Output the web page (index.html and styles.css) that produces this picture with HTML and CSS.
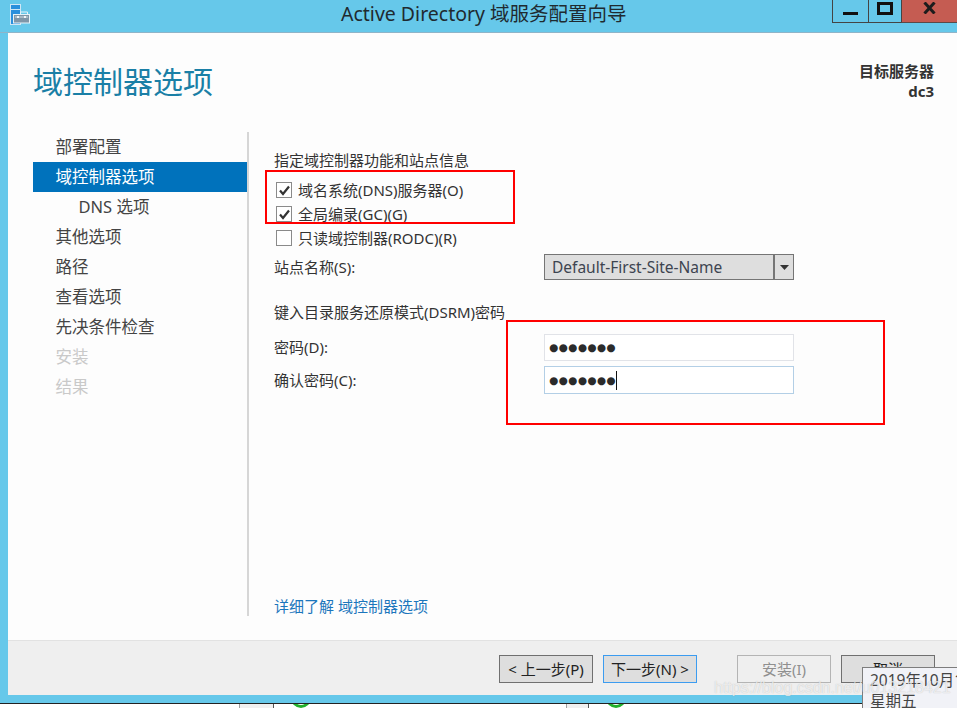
FILE: index.html
```html
<!DOCTYPE html>
<html lang="zh-CN">
<head>
<meta charset="utf-8">
<title>Active Directory 域服务配置向导</title>
<link rel="stylesheet" href="styles.css">
</head>
<body>
<div class="window">
  <header class="titlebar">
    <svg class="app-icon" width="22" height="22" viewBox="0 0 22 22">
      <rect x="0.5" y="0.5" width="10" height="20" fill="#2a8fdc" stroke="#cfe6f5"/>
      <rect x="1" y="5" width="9" height="1" fill="#cfe6f5"/>
      <path d="M10.5 10.5v-2.500h7v2.500" fill="none" stroke="#e6f2f8"/>
      <rect x="3.500" y="10.500" width="16" height="8.500" fill="#7f96a8" stroke="#e6f2f8"/>
      <rect x="5" y="12" width="13" height="2" fill="#a9bac6"/>
      <rect x="7" y="12" width="2" height="2" fill="#f2f6f8"/>
      <rect x="14" y="12" width="2" height="2" fill="#f2f6f8"/>
    </svg>
    <h1 class="window-title">Active Directory 域服务配置向导</h1>
    <div class="controls">
      <div class="ctl ctl-min"><span class="min-glyph"></span></div>
      <div class="ctl ctl-max"><span class="max-glyph"></span></div>
      <div class="ctl ctl-close">
        <svg width="13" height="12" viewBox="0 0 13 12"><path d="M1.500 0.500L11.500 11.500M11.500 0.500L1.500 11.500" stroke="#1c1c1c" stroke-width="3" fill="none"/></svg>
      </div>
    </div>
  </header>
  <main class="client">
    <section class="content">
      <div class="page-head">
        <h2 class="page-title">域控制器选项</h2>
        <div class="target"><div>目标服务器</div><div>dc3</div></div>
      </div>
      <div class="page-body">
        <nav class="nav">
          <div class="nav-item">部署配置</div>
          <div class="nav-item active">域控制器选项</div>
          <div class="nav-item sub">DNS 选项</div>
          <div class="nav-item">其他选项</div>
          <div class="nav-item">路径</div>
          <div class="nav-item">查看选项</div>
          <div class="nav-item">先决条件检查</div>
          <div class="nav-item off">安装</div>
          <div class="nav-item off">结果</div>
        </nav>
        <div class="form">
          <div class="section-label">指定域控制器功能和站点信息</div>
          <div class="check-row first-check">
            <span class="box"><svg width="13" height="13" viewBox="0 0 13 13"><path d="M2 6.500L5 10L11 2.500" stroke="#333" stroke-width="2.200" fill="none"/></svg></span>
            <span>域名系统(DNS)服务器(O)</span>
          </div>
          <div class="check-row">
            <span class="box"><svg width="13" height="13" viewBox="0 0 13 13"><path d="M2 6.500L5 10L11 2.500" stroke="#333" stroke-width="2.200" fill="none"/></svg></span>
            <span>全局编录(GC)(G)</span>
          </div>
          <div class="check-row">
            <span class="box"></span>
            <span>只读域控制器(RODC)(R)</span>
          </div>
          <div class="field site-field">
            <label class="field-label">站点名称(S):</label>
            <div class="select">
              <span class="select-value">Default-First-Site-Name</span>
              <span class="select-arrow"><svg width="9" height="5" viewBox="0 0 9 5"><path d="M0 0h9L4.500 5z" fill="#333"/></svg></span>
            </div>
          </div>
          <div class="section-label dsrm-label">键入目录服务还原模式(DSRM)密码</div>
          <div class="field pw-field">
            <label class="field-label">密码(D):</label>
            <div class="input"><span class="dots">●●●●●●●</span></div>
          </div>
          <div class="field confirm-field">
            <label class="field-label">确认密码(C):</label>
            <div class="input focused"><span class="dots">●●●●●●●</span><span class="caret"></span></div>
          </div>
          <a class="learn" href="#">详细了解 域控制器选项</a>
        </div>
      </div>
    </section>
    <footer class="footer">
      <button class="btn">&lt; 上一步(P)</button>
      <button class="btn primary">下一步(N) &gt;</button>
      <button class="btn disabled">安装(I)</button>
      <button class="btn">取消</button>
    </footer>
  </main>
</div>
<div class="underlay">
  <div class="u-cell u-first"></div>
  <div class="u-cell u-gray"></div>
  <div class="u-cell u-item"><span class="u-ring"></span><span class="u-text">可自 运行</span></div>
  <div class="u-cell u-gray u-gray2"></div>
  <div class="u-cell u-item u-last"><span class="u-ring"></span><span class="u-text">可自 运行</span></div>
</div>

<div class="mark mark-a"></div>
<div class="mark mark-b"></div>
<div class="tooltip"><div>2019年10月1</div><div>星期五</div></div>
<div class="watermark">https://blog.csdn.net/u013218421</div>
</body>
</html>
```
FILE: styles.css
```css
* { box-sizing: border-box; }
html, body { margin: 0; padding: 0; }
body {
  width: 957px;
  height: 708px;
  overflow: hidden;
  position: relative;
  background: #fff;
  color: #333;
  font-family: "Noto Sans", "Noto Sans CJK SC", sans-serif;
  font-size: 15px;
}
.window {
  height: 703px;
  background: #66c8ea;
  padding: 0 0 8px 8px;
  display: flex;
  flex-direction: column;
}
.titlebar {
  height: 33px;
  flex: none;
  margin-left: -8px;
  display: flex;
  border-bottom: 1px solid #8fb4c8;
}
.app-icon { margin: 4px 0 0 10px; flex: none; }
.window-title {
  margin: 0 0 0 309px;
  font-size: 19.500px;
  font-weight: 400;
  line-height: 28px;
  color: #1f2a30;
  white-space: nowrap;
}
.controls {
  margin-left: auto;
  display: flex;
  height: 23px;
  align-items: stretch;
}
.ctl {
  display: flex;
  align-items: center;
  justify-content: center;
  border-bottom: 1px solid #444;
  border-left: 1px solid #444;
}
.ctl-min { width: 36px; }
.ctl-max { width: 33px; }
.ctl-close { width: 56px; background: #c55c52; border-bottom-color: #5d4a48; }
.min-glyph { width: 15px; height: 3px; background: #111; margin-top: 5px; }
.max-glyph { width: 16px; height: 13px; border: 3px solid #111; margin-bottom: 6px; }
.ctl-close svg { margin-bottom: 6px; }
.client { flex: 1; display: flex; flex-direction: column; min-height: 0; }
.content { flex: 1; background: #fdfdfd; display: flex; flex-direction: column; min-height: 0; }
.page-head {
  height: 99px;
  flex: none;
  display: flex;
  justify-content: space-between;
  padding: 0 23px 0 25px;
}
.page-title {
  margin: 27px 0 0;
  font-size: 30px;
  font-weight: 400;
  line-height: 44px;
  color: #1a7fa6;
}
.target {
  margin-top: 28px;
  font-size: 15px;
  font-weight: 700;
  line-height: 20px;
  text-align: right;
  color: #333;
}
.page-body { height: 484px; display: flex; flex: none; }
.nav {
  width: 216px;
  flex: none;
  margin-left: 25px;
  border-right: 2px solid #d6d6d6;
}
.nav-item {
  height: 30px;
  width: 214px;
  padding: 0 0 0 22.500px;
  font-size: 16.500px;
  line-height: 30px;
  color: #444;
}
.nav-item.active { background: #0072bc; color: #fff; }
.nav-item.sub { padding-left: 45.500px; }
.nav-item.off { color: #c9c9c9; }
.form {
  flex: 1;
  padding: 18px 0 0 25px;
  display: flex;
  flex-direction: column;
  font-size: 15px;
  color: #333;
  line-height: 20px;
}
.section-label { height: 20px; }
.check-row {
  height: 24px;
  display: flex;
  align-items: center;
  gap: 6px;
  padding-left: 2px;
}
.first-check { margin-top: 8px; }
.box {
  width: 16px;
  height: 16px;
  flex: none;
  border: 1px solid #8a8a8a;
  background: #fff;
  display: flex;
  align-items: center;
  justify-content: center;
}
.field { display: flex; align-items: center; }
.field-label { width: 270px; flex: none; line-height: 19px; }
.site-field { height: 26px; margin-top: 4px; }
.select {
  width: 250px;
  height: 26px;
  display: flex;
  border: 1px solid #757575;
  background: #dedede;
  font-size: 15.500px;
}
.select-value { flex: 1; padding-left: 7px; line-height: 24px; color: #3d4450; }
.select-arrow {
  width: 20px;
  border-left: 2px solid #757575;
  display: flex;
  align-items: center;
  justify-content: center;
}
.dsrm-label { margin-top: 22px; }
.pw-field { margin-top: 12px; }
.confirm-field { margin-top: 5px; }
.input {
  width: 250px;
  height: 27px;
  border: 1px solid #e1e3e8;
  background: #fff;
  display: flex;
  align-items: center;
  padding-left: 4px;
}
.input.focused { border-color: #b3cfe6; height: 28px; }
.dots {
  font-family: "DejaVu Sans", sans-serif;
  font-size: 10.500px;
  letter-spacing: 0.400px;
  color: #2b2b2b;
  line-height: 1;
}
.caret { width: 1px; height: 19px; background: #111; }
.learn {
  margin-top: auto;
  color: #1b76bc;
  text-decoration: none;
  height: 20px;
}
.footer {
  height: 55px;
  flex: none;
  background: #efefef;
  border-top: 1px solid #e2e2e2;
  display: flex;
  align-items: flex-start;
  padding: 14px 0 0 491px;
  gap: 10px;
}
.btn {
  width: 94px;
  height: 28px;
  padding: 0;
  border: 1px solid #707070;
  background: #dedede;
  color: #222;
  font: inherit;
  font-size: 15px;
  line-height: 24px;
}
.btn.primary { border-color: #3c9cf0; }
.btn.disabled { margin-left: 30px; border-color: #b4b4b4; background: #efefef; color: #8f8f8f; }
.underlay {
  height: 5px;
  display: flex;
  overflow: hidden;
  border-top: 1px solid #222;
  background: #fff;
}
.u-cell { height: 24px; flex: none; }
.u-first { width: 239px; }
.u-gray { width: 35px; background: #f0f0f0; border-left: 1px solid #a0a0a0; border-right: 1px solid #555; }
.u-gray2 { width: 23px; }
.u-item {
  width: 292px;
  display: flex;
  gap: 29px;
  padding-left: 17px;
  margin-top: -20px;
}
.u-last { width: 300px; }
.u-ring {
  width: 20px;
  height: 20px;
  margin-top: 4px;
  border: 3px solid #22b02c;
  border-radius: 50%;
  flex: none;
}
.u-text { font-size: 15px; line-height: 22px; color: #222; white-space: nowrap; }
.mark {
  position: absolute;
  border: 2px solid #ff0000;
}
.mark-a { left: 265px; top: 170px; width: 250px; height: 54px; }
.mark-b { left: 506px; top: 320px; width: 379px; height: 105px; }
.tooltip {
  position: absolute;
  left: 862px;
  top: 667px;
  width: 100px;
  height: 46px;
  padding: 2px 0 0 7px;
  background: #f1f2f7;
  border: 1px solid #7d7d7d;
  font-size: 15.500px;
  line-height: 21px;
  color: #444;
  white-space: nowrap;
  overflow: hidden;
}
.watermark {
  position: absolute;
  left: 714px;
  top: 676px;
  font-family: "Liberation Sans", sans-serif;
  font-size: 16px;
  line-height: 24px;
  color: rgba(255, 255, 255, 0.7);
  text-shadow: 0 0 1px rgba(120, 120, 120, 0.45);
  white-space: nowrap;
}
```
